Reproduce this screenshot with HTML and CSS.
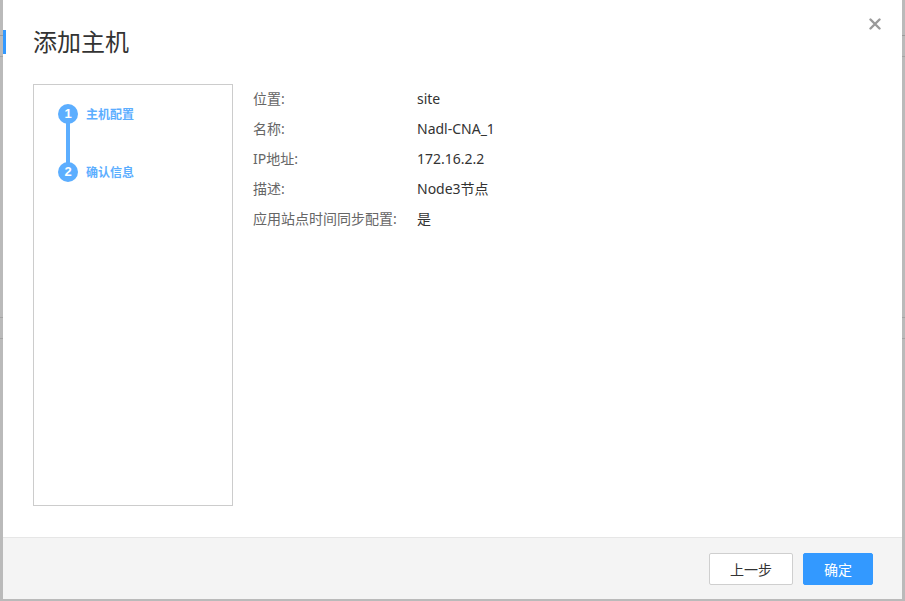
FILE: index.html
```html
<!DOCTYPE html>
<html lang="zh-CN">
<head>
<meta charset="utf-8">
<title>添加主机</title>
<link rel="stylesheet" href="styles.css">
</head>
<body>
<div class="dialog">
  <button class="close" aria-label="关闭">
    <svg width="12" height="12" viewBox="0 0 12 12"><path d="M1.5 1.5L10.5 10.5M10.5 1.5L1.5 10.5" stroke="#9a9a9a" stroke-width="2.4" stroke-linecap="round"/></svg>
  </button>
  <div class="header">
    <span class="accent"></span>
    <h1 class="title">添加主机</h1>
  </div>
  <div class="content">
    <div class="steps">
      <div class="step">
        <span class="dot">1</span>
        <span class="step-label">主机配置</span>
      </div>
      <div class="connector"></div>
      <div class="step">
        <span class="dot">2</span>
        <span class="step-label">确认信息</span>
      </div>
    </div>
    <div class="info">
      <div class="label">位置:</div><div class="value">site</div>
      <div class="label">名称:</div><div class="value">Nadl-CNA_1</div>
      <div class="label">IP地址:</div><div class="value">172.16.2.2</div>
      <div class="label">描述:</div><div class="value">Node3节点</div>
      <div class="label">应用站点时间同步配置:</div><div class="value">是</div>
    </div>
  </div>
  <div class="footer">
    <button class="btn btn-default">上一步</button>
    <button class="btn btn-primary">确定</button>
  </div>
</div>
</body>
</html>
```

FILE: styles.css
```css
html, body {
  margin: 0;
  padding: 0;
}
body {
  width: 905px;
  height: 601px;
  overflow: hidden;
  box-sizing: border-box;
  padding-left: 3px;
  background:
    linear-gradient(#9c9c9c, #9c9c9c) 0 35px / 100% 1px no-repeat,
    linear-gradient(#a4a4a4, #a4a4a4) 0 56px / 100% 1px no-repeat,
    linear-gradient(#a4a4a4, #a4a4a4) 0 317px / 100% 1px no-repeat,
    linear-gradient(#a4a4a4, #a4a4a4) 0 338px / 100% 1px no-repeat,
    #bababa;
  font-family: "Noto Sans", "Noto Sans CJK SC", sans-serif;
}
.dialog {
  position: relative;
  width: 899px;
  height: 599px;
  background: #fff;
  display: flex;
  flex-direction: column;
}
.close {
  position: absolute;
  top: 18px;
  right: 21px;
  width: 12px;
  height: 12px;
  padding: 0;
  border: 0;
  background: none;
  display: flex;
}
.header {
  display: flex;
  align-items: center;
  padding-top: 30px;
  height: 24px;
}
.accent {
  width: 3px;
  height: 24px;
  background: #3399ff;
}
.title {
  margin: 0 0 0 27px;
  font-size: 24px;
  line-height: 24px;
  font-weight: normal;
  color: #333;
}
.content {
  display: flex;
  gap: 20px;
  padding-left: 30px;
  margin-top: 30px;
}
.steps {
  width: 198px;
  height: 420px;
  border: 1px solid #cccccc;
  padding: 19px 0 0 24px;
  box-sizing: content-box;
  width: 174px;
  height: 401px;
}
.step {
  display: flex;
  align-items: center;
  height: 20px;
}
.dot {
  width: 20px;
  height: 20px;
  border-radius: 50%;
  background: #5caeff;
  color: #fff;
  font-size: 13px;
  font-weight: bold;
  line-height: 20px;
  text-align: center;
  font-family: "Liberation Sans", sans-serif;
}
.step-label {
  margin-left: 8px;
  font-size: 12px;
  font-weight: bold;
  color: #5caeff;
}
.connector {
  width: 4px;
  height: 40px;
  margin: -1px 0 -1px 8px;
  background: #5caeff;
}
.info {
  display: grid;
  grid-template-columns: 164px auto;
  grid-auto-rows: 30px;
  align-content: start;
  font-size: 14px;
  line-height: 30px;
}
.label {
  color: #666;
}
.value {
  color: #333;
}
.footer {
  margin-top: auto;
  height: 61px;
  border-top: 1px solid #e6e6e6;
  background: #f4f4f4;
  display: flex;
  justify-content: flex-end;
  align-items: flex-start;
  gap: 10px;
  padding: 15px 29px 0 0;
  box-sizing: border-box;
  height: 62px;
}
.btn {
  height: 32px;
  font-size: 14px;
  font-family: "Noto Sans", "Noto Sans CJK SC", sans-serif;
  border-radius: 2px;
  padding: 0;
  cursor: pointer;
}
.btn-default {
  width: 84px;
  background: #fff;
  border: 1px solid #cfcfcf;
  color: #333;
}
.btn-primary {
  width: 70px;
  background: #3399ff;
  border: 1px solid #3399ff;
  color: #fff;
}
```
